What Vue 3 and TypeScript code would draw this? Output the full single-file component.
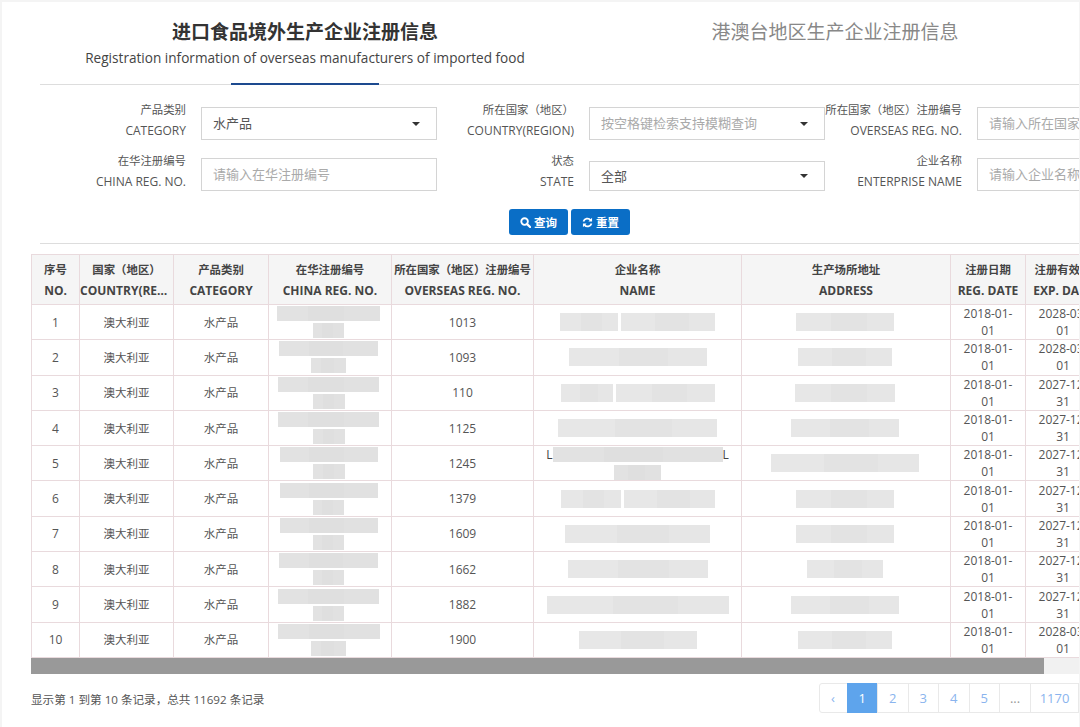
<script setup lang="ts">
interface Row {
  no: number;
  overseas: string;
  china: [number, number];
  name: number[];
  nameLine2?: number;
  address: number;
  exp: [string, string];
}

const rows: Row[] = [
  { no: 1, overseas: '1013', china: [103, 31], name: [58, 94], address: 98, exp: ['2028-03-', '01'] },
  { no: 2, overseas: '1093', china: [99, 35], name: [138], address: 94, exp: ['2028-03-', '01'] },
  { no: 3, overseas: '110', china: [101, 32], name: [52, 99], address: 100, exp: ['2027-12-', '31'] },
  { no: 4, overseas: '1125', china: [101, 32], name: [159], address: 108, exp: ['2027-12-', '31'] },
  { no: 5, overseas: '1245', china: [98, 32], name: [170], nameLine2: 47, address: 148, exp: ['2027-12-', '31'] },
  { no: 6, overseas: '1379', china: [98, 31], name: [60, 91], address: 98, exp: ['2027-12-', '31'] },
  { no: 7, overseas: '1609', china: [98, 31], name: [145], address: 98, exp: ['2027-12-', '31'] },
  { no: 8, overseas: '1662', china: [99, 31], name: [140], address: 76, exp: ['2027-12-', '31'] },
  { no: 9, overseas: '1882', china: [101, 31], name: [182], address: 108, exp: ['2027-12-', '31'] },
  { no: 10, overseas: '1900', china: [102, 35], name: [118], address: 94, exp: ['2028-03-', '01'] },
];

const pages = ['2', '3', '4', '5'];
</script>

<template>
  <div class="page">
    <div class="tabs">
      <div class="tab active">
        <h2>进口食品境外生产企业注册信息</h2>
        <p>Registration information of overseas manufacturers of imported food</p>
      </div>
      <div class="tab">
        <h2>港澳台地区生产企业注册信息</h2>
      </div>
    </div>

    <div class="form">
      <div class="field">
        <div class="label"><span class="zh">产品类别</span><span>CATEGORY</span></div>
        <div class="select">水产品<i class="caret"></i></div>
      </div>
      <div class="field">
        <div class="label"><span class="zh">所在国家（地区）</span><span>COUNTRY(REGION)</span></div>
        <div class="select muted">按空格键检索支持模糊查询<i class="caret"></i></div>
      </div>
      <div class="field">
        <div class="label"><span class="zh">所在国家（地区）注册编号</span><span>OVERSEAS REG. NO.</span></div>
        <input class="input" placeholder="请输入所在国家（地区）注册编号" />
      </div>
      <div class="field">
        <div class="label"><span class="zh">在华注册编号</span><span>CHINA REG. NO.</span></div>
        <input class="input" placeholder="请输入在华注册编号" />
      </div>
      <div class="field">
        <div class="label"><span class="zh">状态</span><span>STATE</span></div>
        <div class="select short">全部<i class="caret"></i></div>
      </div>
      <div class="field">
        <div class="label"><span class="zh">企业名称</span><span>ENTERPRISE NAME</span></div>
        <input class="input" placeholder="请输入企业名称" />
      </div>
    </div>

    <div class="actions">
      <button class="btn">
        <svg width="11" height="11" viewBox="0 0 12 12" fill="none" stroke="#fff">
          <circle cx="5" cy="5" r="3.6" stroke-width="2" />
          <path d="M7.8 7.8 11 11" stroke-width="2.4" stroke-linecap="round" />
        </svg>
        查询
      </button>
      <button class="btn">
        <svg width="11" height="11" viewBox="0 0 12 12" fill="none" stroke="#fff" stroke-width="1.9">
          <path d="M1.6 5A4.5 4.5 0 0 1 9.4 3.4" />
          <path d="M10.4 7A4.5 4.5 0 0 1 2.6 8.6" />
          <path d="M11 .8v4H7z" fill="#fff" stroke="none" />
          <path d="M1 11.2v-4h4z" fill="#fff" stroke="none" />
        </svg>
        重置
      </button>
    </div>

    <div class="table-wrap">
      <table>
        <colgroup>
          <col style="width: 48px" />
          <col style="width: 94px" />
          <col style="width: 95px" />
          <col style="width: 123px" />
          <col style="width: 142px" />
          <col style="width: 208px" />
          <col style="width: 209px" />
          <col style="width: 75px" />
          <col style="width: 75px" />
        </colgroup>
        <thead>
          <tr>
            <th><div class="zh">序号</div><div>NO.</div></th>
            <th><div class="zh">国家（地区）</div><div class="clip">COUNTRY(REGION)</div></th>
            <th><div class="zh">产品类别</div><div>CATEGORY</div></th>
            <th><div class="zh">在华注册编号</div><div>CHINA REG. NO.</div></th>
            <th><div class="zh">所在国家（地区）注册编号</div><div>OVERSEAS REG. NO.</div></th>
            <th><div class="zh">企业名称</div><div>NAME</div></th>
            <th><div class="zh">生产场所地址</div><div>ADDRESS</div></th>
            <th><div class="zh">注册日期</div><div>REG. DATE</div></th>
            <th><div class="zh">注册有效期</div><div class="cut">EXP. DATE</div></th>
          </tr>
        </thead>
        <tbody>
          <tr v-for="row in rows" :key="row.no">
            <td>{{ row.no }}</td>
            <td class="zh">澳大利亚</td>
            <td class="zh">水产品</td>
            <td class="china">
              <div class="blur-line"><span class="blur thin" :style="{ width: row.china[0] + 'px' }"></span></div>
              <div class="blur-line"><span class="blur thin" :style="{ width: row.china[1] + 'px' }"></span></div>
            </td>
            <td>{{ row.overseas }}</td>
            <td>
              <div class="blur-line">
                <span v-if="row.nameLine2" class="edge">L</span>
                <span
                  v-for="(w, i) in row.name"
                  :key="i"
                  class="blur"
                  :class="{ thin: row.nameLine2 }"
                  :style="{ width: w + 'px' }"
                ></span>
                <span v-if="row.nameLine2" class="edge">L</span>
              </div>
              <div v-if="row.nameLine2" class="blur-line">
                <span class="blur thin" :style="{ width: row.nameLine2 + 'px' }"></span>
              </div>
            </td>
            <td class="address">
              <div class="blur-line"><span class="blur" :style="{ width: row.address + 'px' }"></span></div>
            </td>
            <td><div>2018-01-</div><div>01</div></td>
            <td><div class="cut">{{ row.exp[0] }}</div><div>{{ row.exp[1] }}</div></td>
          </tr>
        </tbody>
      </table>
    </div>

    <div class="scrollbar"><div class="thumb"></div></div>

    <div class="footer">
      <span class="summary">显示第 1 到第 10 条记录，总共 11692 条记录</span>
      <ul class="pager">
        <li class="prev">‹</li>
        <li class="current">1</li>
        <li v-for="p in pages" :key="p">{{ p }}</li>
        <li class="gap">...</li>
        <li class="last">1170</li>
      </ul>
    </div>
  </div>
</template>

<style>
html,
body {
  margin: 0;
  height: 100%;
  overflow: hidden;
  background: #f4f4f4;
}
</style>

<style scoped>
.page {
  box-sizing: border-box;
  width: 1077px;
  height: 725px;
  margin: 2px 0 0 2px;
  overflow: hidden;
  background: #fff;
  color: #555;
  font-family: "Open Sans", "Noto Sans CJK SC", sans-serif;
  font-size: 12px;
}

.zh {
  font-size: 11.4px;
}

.tabs {
  display: flex;
  margin-left: 38px;
  width: 1039px;
  height: 82px;
  border-bottom: 1px solid #ddd;
}

.tab {
  position: relative;
  flex: none;
  width: 530px;
  height: 82px;
  text-align: center;
}

.tab h2 {
  margin: 16px 0 0;
  font-size: 19px;
  line-height: 28px;
  font-weight: 400;
  color: #888;
}

.tab.active h2 {
  font-weight: 700;
  color: #333;
}

.tab p {
  margin: 1px 0 0;
  font-size: 13.6px;
  line-height: 22px;
  color: #444;
  white-space: nowrap;
}

.tab.active::after {
  content: "";
  position: absolute;
  left: 191px;
  bottom: -1px;
  width: 148px;
  height: 2px;
  background: #1d4a8f;
}

.form {
  display: grid;
  grid-template-columns: repeat(3, 388px);
  grid-auto-rows: 51px;
  margin: 22px 0 0 47px;
}

.field {
  display: flex;
  align-items: flex-end;
  gap: 15px;
  height: 33px;
}

.label {
  display: flex;
  flex-direction: column;
  align-items: flex-end;
  flex: none;
  width: 137px;
  align-self: flex-start;
  margin-top: -8.5px;
  line-height: 21.5px;
  white-space: nowrap;
}

.select,
.input {
  box-sizing: border-box;
  flex: none;
  width: 236px;
  height: 33px;
  padding: 0 11px 2px;
  border: 1px solid #d4d4d4;
  background: #fff;
  font: inherit;
  font-size: 13px;
  color: #555;
  outline: none;
}

.select {
  position: relative;
  display: flex;
  align-items: center;
}

.select.short {
  height: 30px;
}

.select.muted,
.input::placeholder {
  color: #aaa;
}

.caret {
  position: absolute;
  right: 16px;
  top: 50%;
  margin-top: -2px;
  border-style: solid;
  border-width: 4px 4px 0;
  border-color: #333 transparent transparent;
}

.actions {
  display: flex;
  justify-content: center;
  gap: 3px;
  box-sizing: border-box;
  width: 1039px;
  margin: 0 0 0 38px;
  padding: 0 0 8px 20px;
  border-bottom: 1px solid #ddd;
}

.btn {
  display: inline-flex;
  align-items: center;
  justify-content: center;
  gap: 3px;
  width: 59px;
  height: 26px;
  padding: 0;
  border: none;
  border-radius: 3px;
  background: #0a6ec6;
  color: #fff;
  font: inherit;
  font-size: 11.5px;
  font-weight: 700;
}

.table-wrap {
  margin: 10px 0 0 29px;
  width: 1048px;
  overflow: hidden;
}

table {
  table-layout: fixed;
  width: 1069px;
  border-collapse: collapse;
  border: 1px solid #e9dadd;
}

th,
td {
  border: 1px solid #e9dadd;
  padding: 0;
  text-align: center;
  font-weight: 400;
}

thead tr {
  height: 50px;
}

th {
  background: #f5f5f5;
  font-weight: 700;
  color: #444;
  line-height: 21px;
  white-space: nowrap;
  overflow: hidden;
}

.clip {
  overflow: hidden;
  text-overflow: ellipsis;
}

tbody tr {
  height: 35.3px;
}

td {
  line-height: 17px;
}

td.zh {
  font-size: 11.5px;
}

td.china {
  padding-right: 3px;
}

td.address {
  padding-right: 2px;
}

.cut {
  white-space: nowrap;
}

.blur-line {
  display: flex;
  justify-content: center;
  align-items: center;
  gap: 3px;
}

.blur-line + .blur-line {
  margin-top: 2px;
}

.blur {
  flex: none;
  display: block;
  height: 18px;
  background: linear-gradient(90deg, #e7e7e7 0 36%, #e3e3e3 36% 72%, #e6e6e6 72%);
}

.blur.thin {
  height: 15px;
  background: linear-gradient(90deg, #e2e2e2 0 30%, #dfdfdf 30% 65%, #e1e1e1 65%);
}

.edge {
  margin: 0 -3px;
  color: #444;
}

.scrollbar {
  width: 1048px;
  height: 16px;
  margin-left: 29px;
  background: #f1f1f1;
}

.thumb {
  width: 1013px;
  height: 16px;
  background: #999;
}

.footer {
  display: flex;
  justify-content: space-between;
  align-items: center;
  margin: 9px 0 0 29px;
  white-space: nowrap;
}

.summary {
  color: #555;
  font-size: 11.6px;
  padding-top: 3px;
}

.pager {
  display: flex;
  flex: none;
  margin: 0;
  padding: 0;
  list-style: none;
  height: 30px;
  color: #8ab4ee;
  font-size: 13px;
  line-height: 28px;
  text-align: center;
}

.pager li {
  box-sizing: border-box;
  width: 31.5px;
  border: 1px solid #e9e9e9;
  margin-left: -1px;
}

.pager .prev {
  width: 29px;
  margin-left: 0;
  border-radius: 3px 0 0 3px;
}

.pager .current {
  background: #5ea4ec;
  border-color: #5ea4ec;
  color: #fff;
}

.pager .gap {
  width: 32px;
  color: #999;
}

.pager .last {
  width: 49px;
}
</style>
